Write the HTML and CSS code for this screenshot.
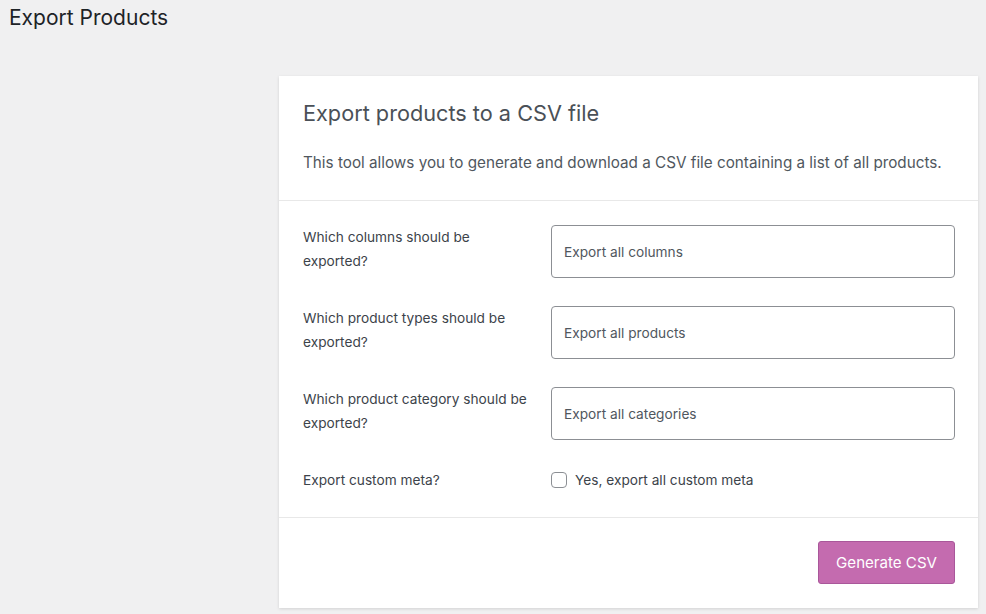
FILE: index.html
```html
<!DOCTYPE html>
<html lang="en">
<head>
<meta charset="utf-8">
<title>Export Products</title>
<link rel="stylesheet" href="styles.css">
</head>
<body>
<div class="wrap">
  <h1 class="page-title">Export Products</h1>
  <div class="exporter">
    <header class="exporter-header">
      <h2 class="exporter-title">Export products to a CSV file</h2>
      <p class="exporter-desc">This tool allows you to generate and download a CSV file containing a list of all products.</p>
    </header>
    <section class="exporter-form">
      <div class="form-row">
        <label class="form-label">Which columns should be exported?</label>
        <div class="select-box">Export all columns</div>
      </div>
      <div class="form-row">
        <label class="form-label">Which product types should be exported?</label>
        <div class="select-box">Export all products</div>
      </div>
      <div class="form-row">
        <label class="form-label">Which product category should be exported?</label>
        <div class="select-box">Export all categories</div>
      </div>
      <div class="form-row form-row-check">
        <label class="form-label">Export custom meta?</label>
        <label class="check-label"><span class="checkbox"></span>Yes, export all custom meta</label>
      </div>
    </section>
    <footer class="exporter-footer">
      <button class="btn-primary" type="button">Generate CSV</button>
    </footer>
  </div>
</div>
</body>
</html>
```
FILE: styles.css
```css
* { box-sizing: border-box; }
html, body { margin: 0; padding: 0; }
body {
  background: #f0f0f1;
  font-family: Inter, "Liberation Sans", sans-serif;
  color: #3c434a;
  width: 986px;
  height: 614px;
  overflow: hidden;
}
.wrap {
  padding: 0 8px 0 9px;
  display: flex;
  flex-direction: column;
}
.page-title {
  margin: 0;
  padding-top: 3px;
  font-size: 21px;
  line-height: 30px;
  font-weight: 400;
  color: #1d2327;
}
.exporter {
  margin-top: 43px;
  margin-left: auto;
  width: 699px;
  height: 532px;
  background: #fff;
  box-shadow: 0 1px 3px rgba(0,0,0,.13);
  display: flex;
  flex-direction: column;
}
.exporter-header {
  padding: 23px 24px 0;
  height: 125px;
  border-bottom: 1px solid #e8e8e8;
}
.exporter-title {
  margin: 0;
  font-size: 21.7px;
  line-height: 28px;
  font-weight: 400;
  color: #4a5057;
}
.exporter-desc {
  margin: 24px 0 0;
  font-size: 15.25px;
  line-height: 24px;
  color: #50575e;
}
.exporter-form {
  padding: 24px 23px 25px 24px;
  display: flex;
  flex-direction: column;
  gap: 28px;
  border-bottom: 1px solid #e8e8e8;
}
.form-row {
  display: flex;
  align-items: center;
}
.form-label {
  width: 248px;
  padding: 0 20px 5px 0;
  font-size: 13.7px;
  line-height: 24px;
  color: #3c434a;
}
.form-row-check .form-label {
  padding-bottom: 0;
}
.select-box {
  flex: 1;
  height: 53px;
  border: 1px solid #8c8f94;
  border-radius: 4px;
  padding-left: 12px;
  display: flex;
  align-items: center;
  font-size: 13.7px;
  color: #50575e;
}
.check-label {
  display: flex;
  align-items: center;
  font-size: 13.7px;
  color: #3c434a;
}
.checkbox {
  width: 16px;
  height: 16px;
  border: 1px solid #8c8f94;
  border-radius: 4px;
  margin-right: 8px;
}
.exporter-footer {
  flex: 1;
  display: flex;
  justify-content: flex-end;
  align-items: flex-start;
  padding: 23px 23px 0;
}
.btn-primary {
  height: 43px;
  padding: 0 17px;
  background: #c46baf;
  border: 1px solid #a9579a;
  border-radius: 3px;
  color: #fff;
  font-family: inherit;
  font-size: 15.1px;
}
```
